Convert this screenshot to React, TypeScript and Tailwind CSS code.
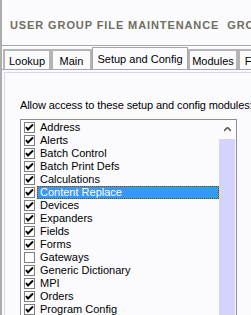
const items: { label: string; checked: boolean }[] = [
  { label: "Address", checked: true },
  { label: "Alerts", checked: true },
  { label: "Batch Control", checked: true },
  { label: "Batch Print Defs", checked: true },
  { label: "Calculations", checked: true },
  { label: "Content Replace", checked: true },
  { label: "Devices", checked: true },
  { label: "Expanders", checked: true },
  { label: "Fields", checked: true },
  { label: "Forms", checked: true },
  { label: "Gateways", checked: false },
  { label: "Generic Dictionary", checked: true },
  { label: "MPI", checked: true },
  { label: "Orders", checked: true },
  { label: "Program Config", checked: true },
];

const tabs: { label: string; w: string; active?: boolean }[] = [
  { label: "Lookup", w: "w-[48px]" },
  { label: "Main", w: "w-[41px]" },
  { label: "Setup and Config", w: "w-[96px]", active: true },
  { label: "Modules", w: "w-[50px]" },
  { label: "F", w: "w-[20px]" },
];

function Check({ checked }: { checked: boolean }) {
  return (
    <span className="w-[11px] h-[11px] shrink-0 border border-[#7f7f7f] bg-white flex items-center justify-center">
      {checked && (
        <svg width="9" height="9" viewBox="0 0 9 9">
          <path d="M1 4 L3 6.5 L8 1.5" stroke="#000" strokeWidth="2" fill="none" />
        </svg>
      )}
    </span>
  );
}

export default function App() {
  return (
    <div
      className="w-[251px] h-[315px] overflow-hidden bg-[#fbfbfe] flex text-[11px] text-black"
      style={{ fontFamily: '"Liberation Sans", Arial, sans-serif' }}
    >
      {/* window edge */}
      <div className="w-[2px] shrink-0 bg-[#acacac]" />
      <div className="flex-1 flex flex-col min-w-0">
        <div className="h-[45px] shrink-0 flex items-end pb-[14px] pl-[8px] whitespace-nowrap overflow-hidden">
          <span className="font-bold text-[11px] tracking-[0.9px] text-[#6f6f5f] leading-none">
            USER GROUP FILE MAINTENANCE&nbsp;&nbsp;GROUP
          </span>
        </div>
        <div className="h-[1px] bg-[#a8a8a8] shrink-0" />

        {/* tab strip */}
        <div className="h-[23px] shrink-0 flex items-end pl-[1px] whitespace-nowrap overflow-hidden">
          {tabs.map((t) =>
            t.active ? (
              <div
                key={t.label}
                className={`${t.w} shrink-0 h-[23px] text-center pt-[3px] border border-b-0 border-[#a8a8a8] bg-[#fbfbfe] -mb-[1px] relative`}
              >
                {t.label}
              </div>
            ) : (
              <div
                key={t.label}
                className={`${t.w} shrink-0 h-[20px] text-center pt-[2px] border-2 border-b-0 border-[#b4b4b4]`}
              >
                {t.label}
              </div>
            )
          )}
        </div>
        <div className="h-[1px] bg-[#a8a8a8] shrink-0" />

        {/* panel */}
        <div className="flex-1 pl-[2px] pt-[2px] flex">
          <div className="flex-1 border-l border-t border-[#d8d8ef] pl-[15px] pt-[25px] flex flex-col">
            <div className="whitespace-nowrap leading-[14px] tracking-[-0.1px]">
              Allow access to these setup and config modules:
            </div>
            <div className="mt-[7px] w-[217px] flex-1 border border-[#8e8aa8] border-b-0 flex bg-[#fbfbfe]">
              <div className="flex-1 flex flex-col pt-[1px]">
                {items.map((it) => {
                  const sel = it.label === "Content Replace";
                  return (
                    <div key={it.label} className="h-[13px] shrink-0 flex items-center pl-[3px] gap-[2px]">
                      <Check checked={it.checked} />
                      <span
                        className={
                          sel
                            ? "flex-1 h-[13px] leading-[11px] pl-[2px] bg-[#3399ff] text-white border border-dotted border-[#7a4a00]"
                            : "pl-[3px] leading-[13px]"
                        }
                      >
                        {it.label}
                      </span>
                    </div>
                  );
                })}
              </div>
              <div className="w-[16px] shrink-0 flex flex-col mr-[1px]">
                <div className="h-[19px] flex items-center justify-center">
                  <svg width="7" height="5" viewBox="0 0 7 5">
                    <path d="M0 4 L3.5 0.5 L7 4" stroke="#5e5e4c" strokeWidth="1.6" fill="none" />
                  </svg>
                </div>
                <div className="flex-1 bg-[#d3d3fb]" />
              </div>
            </div>
          </div>
        </div>
      </div>
    </div>
  );
}
